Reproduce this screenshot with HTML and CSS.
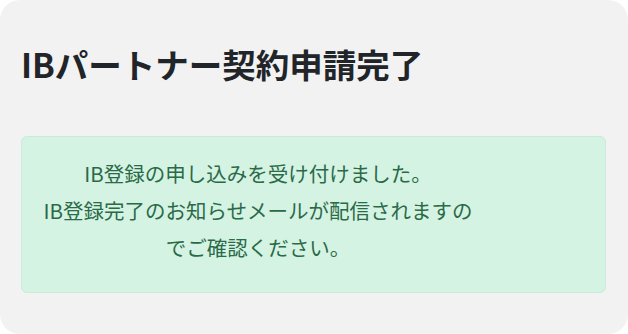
FILE: index.html
```html
<!DOCTYPE html>
<html lang="ja">
<head>
    <meta charset="UTF-8">
    <meta name="viewport" content="width=device-width, initial-scale=1.0">
    <title>IBパートナー契約申請完了</title>
    <link rel="stylesheet" href="styles.css">
</head>
<body>
    <div class="complete-card">
        <h1 class="complete-title">IBパートナー契約申請完了</h1>
        <div class="alert-success">
            <p>IB登録の申し込みを受け付けました。<br>IB登録完了のお知らせメールが配信されますのでご確認ください。</p>
        </div>
    </div>
</body>
</html>
```

FILE: styles.css
```css
* {
    margin: 0;
    padding: 0;
    box-sizing: border-box;
}

body {
    font-family: "Noto Sans CJK JP", "Noto Sans", sans-serif;
    background: #ffffff;
    color: #212529;
}

.complete-card {
    width: 628px;
    height: 334px;
    background: #f2f2f2;
    border-radius: 20px;
    padding: 40px 22px 0 21px;
}

.complete-title {
    font-size: 33.5px;
    font-weight: 700;
    line-height: 48px;
    color: #212529;
}

.alert-success {
    margin-top: 48px;
    height: 157px;
    background: #d5f3e3;
    border: 1px solid #c8ecd9;
    border-radius: 6px;
    padding: 18px 0 0 17px;
    color: #2a6a48;
    font-size: 20.5px;
    line-height: 37px;
}

.alert-success p {
    width: 438px;
    text-align: center;
}
```
